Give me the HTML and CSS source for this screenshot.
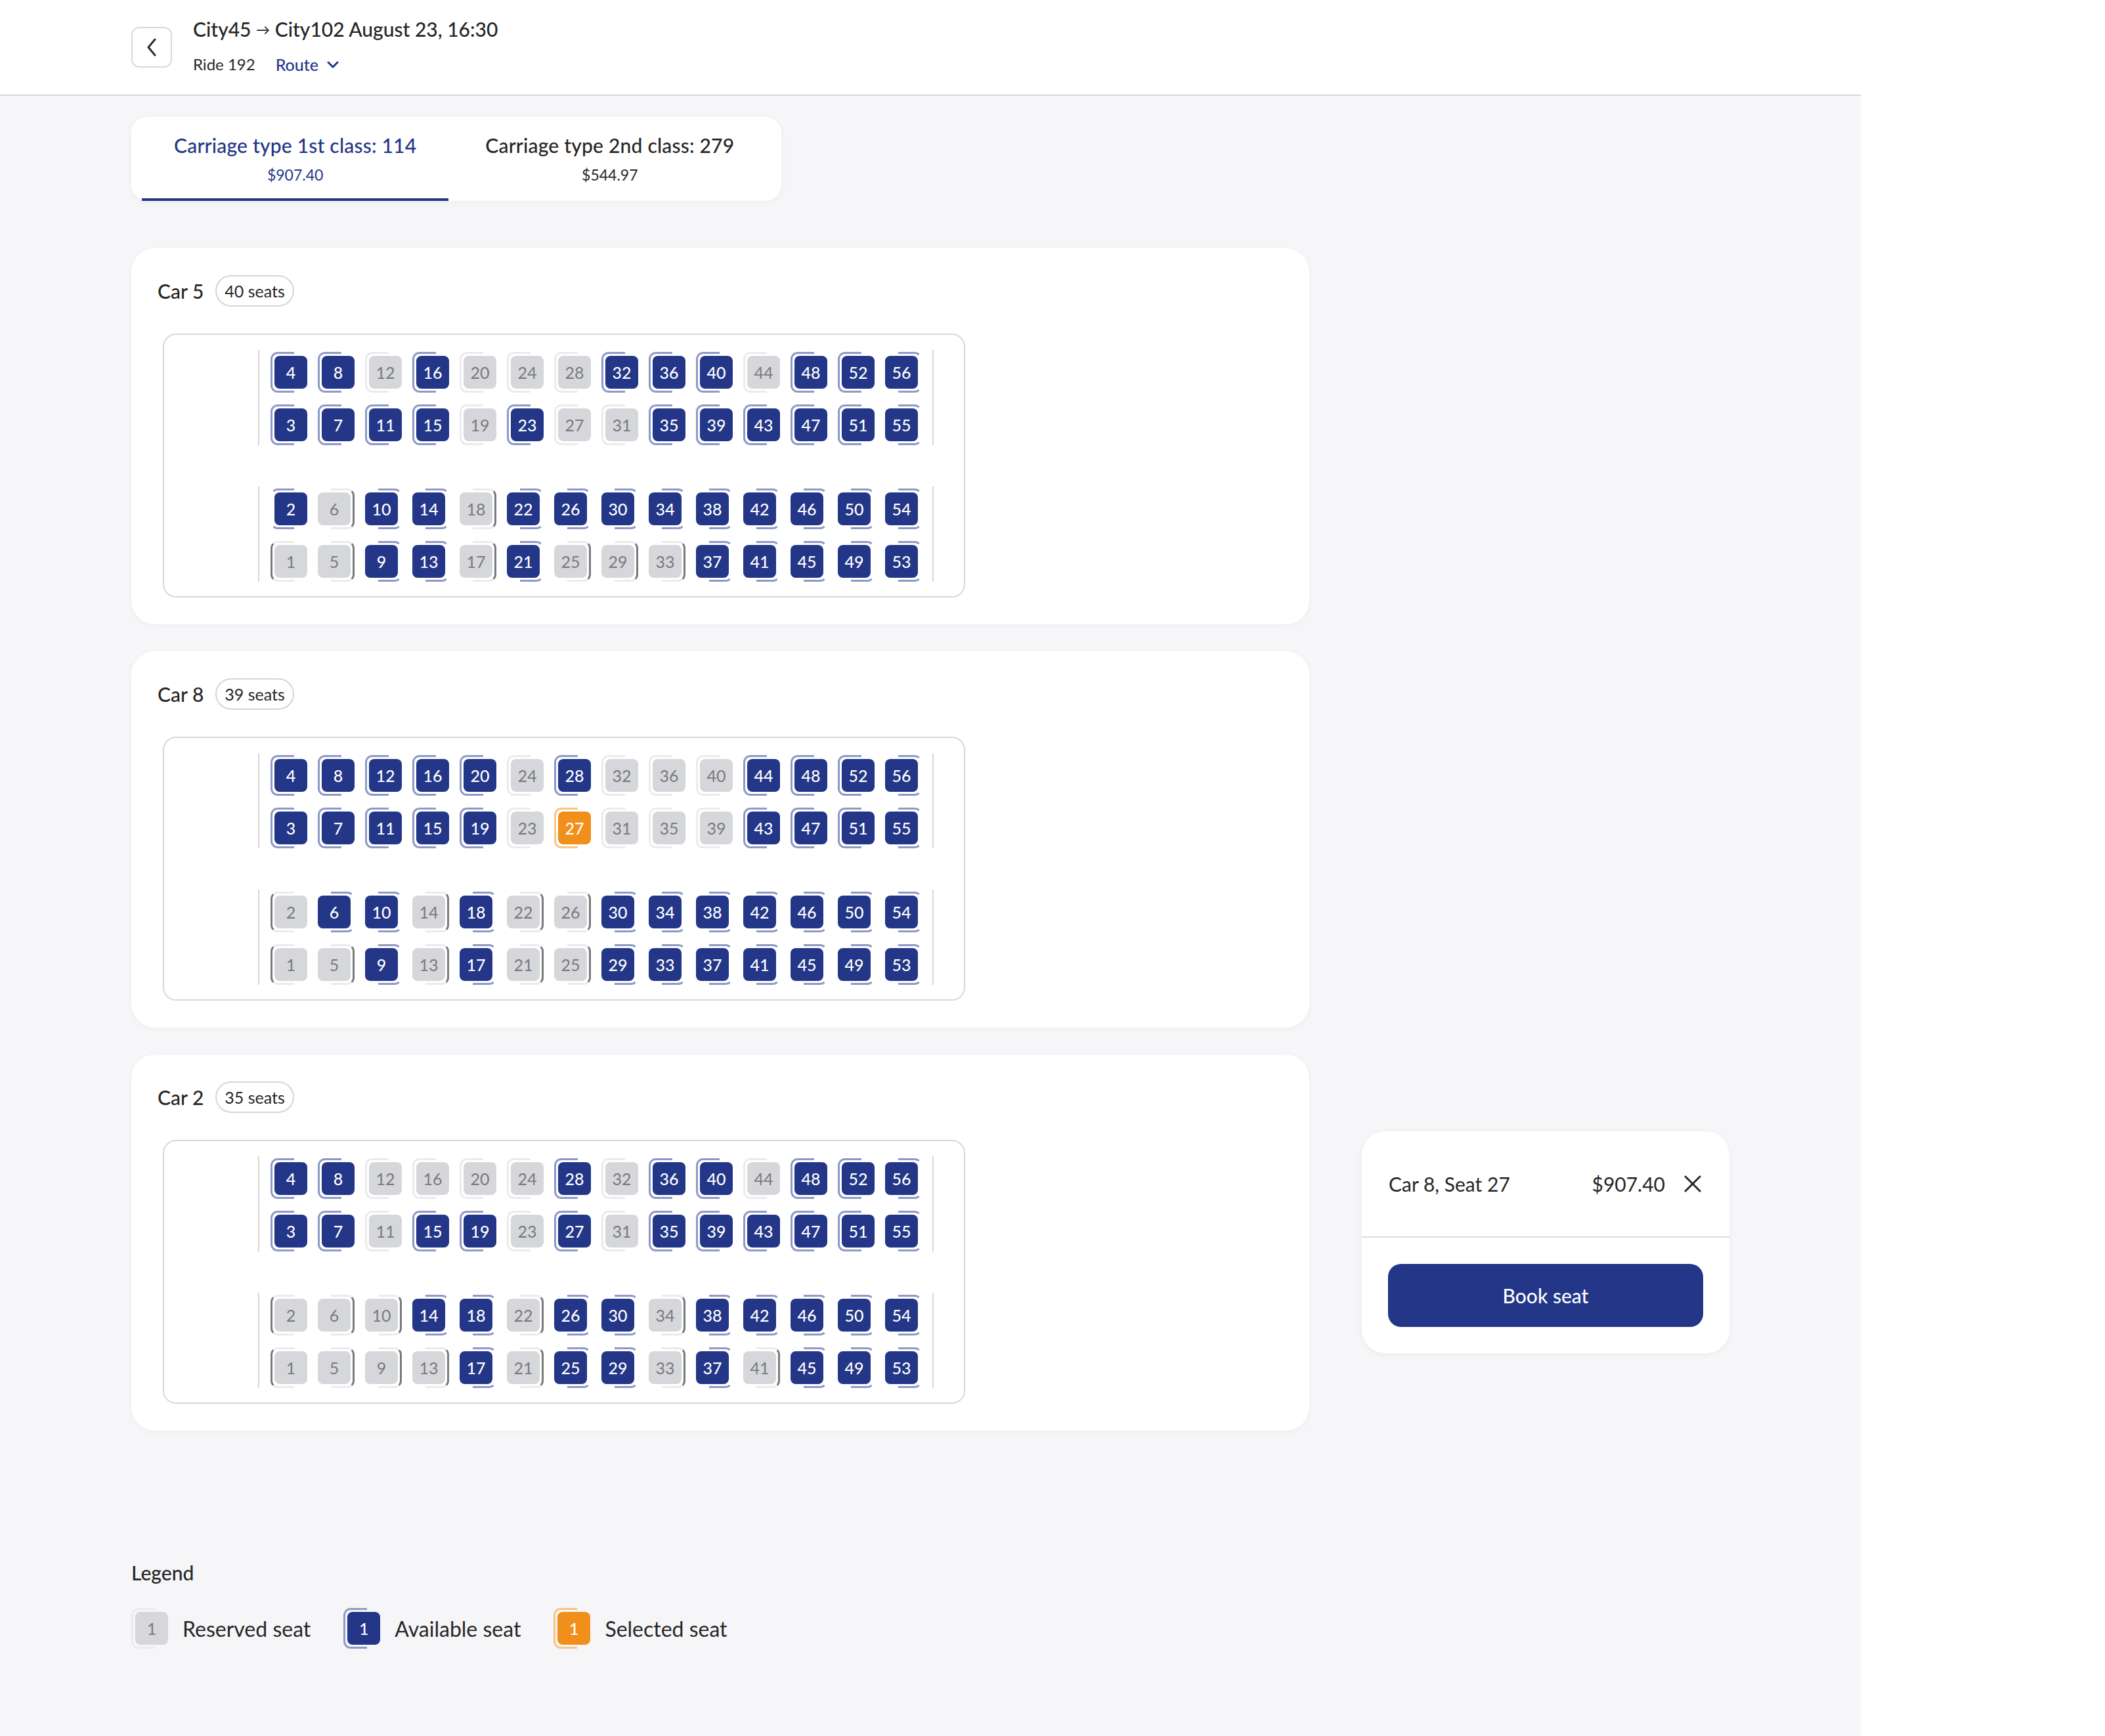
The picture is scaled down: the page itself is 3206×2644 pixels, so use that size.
FILE: index.html
```html
<!DOCTYPE html>
<html lang="en">
<head>
  <meta charset="UTF-8">
  <title>City45 → City102 — Ride 192</title>
  <meta name="viewport" content="width=device-width, initial-scale=1.0">
  <link rel="stylesheet" href="styles.css">
</head>
<body>
  <div class="app">
    <header class="topbar">
      <a class="back" href="#" aria-label="Back">
        <svg width="16" height="28" viewBox="0 0 16 28"><path d="M13 2 L3 14 L13 26" fill="none" stroke="#2b2b2b" stroke-width="3" stroke-linecap="round" stroke-linejoin="round"/></svg>
      </a>
      <div class="trip">
        <div class="trip-title">City45 <span class="arrow">→</span> City102 August 23, 16:30</div>
        <div class="trip-sub">
          <span>Ride 192</span>
          <a class="route" href="#">Route
            <svg width="18" height="11" viewBox="0 0 18 11"><path d="M2 2 L9 9 L16 2" fill="none" stroke="#233687" stroke-width="3" stroke-linecap="round" stroke-linejoin="round"/></svg>
          </a>
        </div>
      </div>
    </header>

    <main class="page">
      <div class="layout">
        <div class="content">
          <!-- Tipos de vagón -->
          <nav class="tabs">
            <a class="tab active" href="#">
              <span class="tab-name">Carriage type 1st class: 114</span>
              <span class="tab-price">$907.40</span>
            </a>
            <a class="tab" href="#">
              <span class="tab-name">Carriage type 2nd class: 279</span>
              <span class="tab-price">$544.97</span>
            </a>
          </nav>

          <!-- Car 5 -->
          <section class="car">
            <div class="car-head">
              <h2>Car 5</h2>
              <span class="badge">40 seats</span>
            </div>
            <div class="seatmap">
              <div class="deck top">
                <div class="row"><span class="seat free">4</span><span class="seat free">8</span><span class="seat taken">12</span><span class="seat free">16</span><span class="seat taken">20</span><span class="seat taken">24</span><span class="seat taken">28</span><span class="seat free">32</span><span class="seat free">36</span><span class="seat free">40</span><span class="seat taken">44</span><span class="seat free">48</span><span class="seat free">52</span><span class="seat free">56</span></div>
                <div class="row"><span class="seat free">3</span><span class="seat free">7</span><span class="seat free">11</span><span class="seat free">15</span><span class="seat taken">19</span><span class="seat free">23</span><span class="seat taken">27</span><span class="seat taken">31</span><span class="seat free">35</span><span class="seat free">39</span><span class="seat free">43</span><span class="seat free">47</span><span class="seat free">51</span><span class="seat free">55</span></div>
              </div>
              <div class="deck bottom">
                <div class="row"><span class="seat free">2</span><span class="seat taken">6</span><span class="seat free">10</span><span class="seat free">14</span><span class="seat taken">18</span><span class="seat free">22</span><span class="seat free">26</span><span class="seat free">30</span><span class="seat free">34</span><span class="seat free">38</span><span class="seat free">42</span><span class="seat free">46</span><span class="seat free">50</span><span class="seat free">54</span></div>
                <div class="row"><span class="seat taken">1</span><span class="seat taken">5</span><span class="seat free">9</span><span class="seat free">13</span><span class="seat taken">17</span><span class="seat free">21</span><span class="seat taken">25</span><span class="seat taken">29</span><span class="seat taken">33</span><span class="seat free">37</span><span class="seat free">41</span><span class="seat free">45</span><span class="seat free">49</span><span class="seat free">53</span></div>
              </div>
            </div>
          </section>

          <!-- Car 8 -->
          <section class="car">
            <div class="car-head">
              <h2>Car 8</h2>
              <span class="badge">39 seats</span>
            </div>
            <div class="seatmap">
              <div class="deck top">
                <div class="row"><span class="seat free">4</span><span class="seat free">8</span><span class="seat free">12</span><span class="seat free">16</span><span class="seat free">20</span><span class="seat taken">24</span><span class="seat free">28</span><span class="seat taken">32</span><span class="seat taken">36</span><span class="seat taken">40</span><span class="seat free">44</span><span class="seat free">48</span><span class="seat free">52</span><span class="seat free">56</span></div>
                <div class="row"><span class="seat free">3</span><span class="seat free">7</span><span class="seat free">11</span><span class="seat free">15</span><span class="seat free">19</span><span class="seat taken">23</span><span class="seat picked">27</span><span class="seat taken">31</span><span class="seat taken">35</span><span class="seat taken">39</span><span class="seat free">43</span><span class="seat free">47</span><span class="seat free">51</span><span class="seat free">55</span></div>
              </div>
              <div class="deck bottom">
                <div class="row"><span class="seat taken">2</span><span class="seat free">6</span><span class="seat free">10</span><span class="seat taken">14</span><span class="seat free">18</span><span class="seat taken">22</span><span class="seat taken">26</span><span class="seat free">30</span><span class="seat free">34</span><span class="seat free">38</span><span class="seat free">42</span><span class="seat free">46</span><span class="seat free">50</span><span class="seat free">54</span></div>
                <div class="row"><span class="seat taken">1</span><span class="seat taken">5</span><span class="seat free">9</span><span class="seat taken">13</span><span class="seat free">17</span><span class="seat taken">21</span><span class="seat taken">25</span><span class="seat free">29</span><span class="seat free">33</span><span class="seat free">37</span><span class="seat free">41</span><span class="seat free">45</span><span class="seat free">49</span><span class="seat free">53</span></div>
              </div>
            </div>
          </section>

          <!-- Car 2 -->
          <section class="car">
            <div class="car-head">
              <h2>Car 2</h2>
              <span class="badge">35 seats</span>
            </div>
            <div class="seatmap">
              <div class="deck top">
                <div class="row"><span class="seat free">4</span><span class="seat free">8</span><span class="seat taken">12</span><span class="seat taken">16</span><span class="seat taken">20</span><span class="seat taken">24</span><span class="seat free">28</span><span class="seat taken">32</span><span class="seat free">36</span><span class="seat free">40</span><span class="seat taken">44</span><span class="seat free">48</span><span class="seat free">52</span><span class="seat free">56</span></div>
                <div class="row"><span class="seat free">3</span><span class="seat free">7</span><span class="seat taken">11</span><span class="seat free">15</span><span class="seat free">19</span><span class="seat taken">23</span><span class="seat free">27</span><span class="seat taken">31</span><span class="seat free">35</span><span class="seat free">39</span><span class="seat free">43</span><span class="seat free">47</span><span class="seat free">51</span><span class="seat free">55</span></div>
              </div>
              <div class="deck bottom">
                <div class="row"><span class="seat taken">2</span><span class="seat taken">6</span><span class="seat taken">10</span><span class="seat free">14</span><span class="seat free">18</span><span class="seat taken">22</span><span class="seat free">26</span><span class="seat free">30</span><span class="seat taken">34</span><span class="seat free">38</span><span class="seat free">42</span><span class="seat free">46</span><span class="seat free">50</span><span class="seat free">54</span></div>
                <div class="row"><span class="seat taken">1</span><span class="seat taken">5</span><span class="seat taken">9</span><span class="seat taken">13</span><span class="seat free">17</span><span class="seat taken">21</span><span class="seat free">25</span><span class="seat free">29</span><span class="seat taken">33</span><span class="seat free">37</span><span class="seat taken">41</span><span class="seat free">45</span><span class="seat free">49</span><span class="seat free">53</span></div>
              </div>
            </div>
          </section>
        </div>

        <!-- Resumen de la reserva -->
        <aside class="booking">
          <div class="booking-line">
            <span class="booking-seat">Car 8, Seat 27</span>
            <span class="booking-price">$907.40</span>
            <a class="close" href="#" aria-label="Remove">
              <svg width="28" height="28" viewBox="0 0 28 28"><path d="M3 3 L25 25 M25 3 L3 25" stroke="#262626" stroke-width="3" stroke-linecap="round"/></svg>
            </a>
          </div>
          <div class="booking-action">
            <button class="btn-book" type="button">Book seat</button>
          </div>
        </aside>
      </div>

      <section class="legend">
        <h3>Legend</h3>
        <div class="legend-items">
          <div class="legend-item"><span class="seat taken">1</span>Reserved seat</div>
          <div class="legend-item"><span class="seat free">1</span>Available seat</div>
          <div class="legend-item"><span class="seat picked">1</span>Selected seat</div>
        </div>
      </section>
    </main>
  </div>
</body>
</html>
```

FILE: styles.css
```css
/* Estructura general */
body {
  margin: 0;
  background: #fff;
  color: #262626;
  font-family: Lato, "Noto Sans", "Liberation Sans", sans-serif;
}

a {
  color: inherit;
  text-decoration: none;
}

.app {
  width: 2834px;
}

/* Cabecera */
.topbar {
  display: flex;
  align-items: flex-start;
  gap: 32px;
  height: 144px;
  padding-left: 200px;
  background: #fff;
  border-bottom: 2px solid #d5d5d9;
}

.back {
  display: flex;
  align-items: center;
  justify-content: center;
  width: 62px;
  height: 62px;
  margin-top: 41px;
  box-sizing: border-box;
  border: 2px solid #dadada;
  border-radius: 12px;
}

.trip {
  margin-top: 24px;
}

.trip-title {
  font-size: 30px;
  line-height: 40px;
  font-weight: 500;
}

.arrow {
  font-size: 21px;
  vertical-align: 3px;
}

.trip-sub {
  display: flex;
  align-items: center;
  gap: 31px;
  margin-top: 17px;
  font-size: 24px;
  line-height: 32px;
}

.route {
  display: flex;
  align-items: center;
  gap: 13px;
  color: #233687;
  font-size: 25px;
  font-weight: 500;
}

/* Zona principal */
.page {
  height: 2498px;
  box-sizing: border-box;
  padding: 32px 200px 0;
  background: #f6f6f8;
}

.layout {
  display: grid;
  grid-template-columns: 1794px 560px;
  column-gap: 80px;
}

.content {
  display: flex;
  flex-direction: column;
  align-items: flex-start;
  gap: 41px;
}

/* Pestañas */
.tabs {
  display: flex;
  margin-bottom: 31px;
  padding: 0 16px;
  background: #fff;
  border-radius: 24px;
  box-shadow: 0 2px 10px rgba(30, 30, 60, 0.05);
}

.tab {
  display: flex;
  flex-direction: column;
  align-items: center;
  gap: 13px;
  padding: 25px 49px 22px;
  border-bottom: 4px solid transparent;
  color: #262626;
}

.tab + .tab {
  padding: 25px 56px 22px;
}

.tab-name {
  font-size: 30px;
  line-height: 36px;
  font-weight: 500;
  letter-spacing: 0.2px;
}

.tab-price {
  font-size: 23px;
  line-height: 28px;
}

.tab.active {
  color: #233687;
  border-bottom-color: #233687;
}

/* Vagones */
.car {
  align-self: stretch;
  padding: 41px 40px;
  background: #fff;
  border-radius: 36px;
  box-shadow: 0 2px 10px rgba(30, 30, 60, 0.04);
}

.car-head {
  display: flex;
  align-items: center;
  gap: 18px;
  height: 48px;
  margin-bottom: 41px;
}

.car-head h2 {
  margin: 0;
  font-size: 30px;
  font-weight: 500;
}

.badge {
  height: 48px;
  box-sizing: border-box;
  padding: 0 12px;
  border: 2px solid #d5d5d5;
  border-radius: 24px;
  font-size: 25px;
  line-height: 44px;
}

.seatmap {
  display: flex;
  flex-direction: column;
  gap: 63px;
  width: fit-content;
  margin-left: 8px;
  padding: 23px 46px 22px 143px;
  border: 2px solid #d8d8db;
  border-radius: 20px;
}

.deck {
  display: flex;
  flex-direction: column;
  gap: 30px;
  padding: 9px 16px 6px 17px;
  border-left: 2px solid #d7d7d7;
  border-right: 2px solid #d7d7d7;
}

.row {
  display: flex;
  gap: 16px;
}

/* Asientos: caja + respaldo */
.seat {
  position: relative;
  display: flex;
  align-items: center;
  justify-content: center;
  flex: none;
  width: 50px;
  height: 50px;
  margin-left: 6px;
  border-radius: 8px;
  font-size: 25px;
  line-height: 1;
  font-weight: 500;
}

.seat::before {
  content: "";
  position: absolute;
  top: -6px;
  bottom: -6px;
  left: -6px;
  width: 33px;
  border: 3px solid;
  border-right: 0;
  border-radius: 11px 0 0 11px;
}

.deck.bottom .seat,
.deck.top .seat:last-child {
  margin-left: 0;
  margin-right: 6px;
}

.deck.bottom .seat::before,
.deck.top .seat:last-child::before {
  left: auto;
  right: -6px;
  border-right: 3px solid;
  border-left: 0;
  border-radius: 0 11px 11px 0;
}

.deck.bottom .seat:first-child {
  margin-left: 6px;
  margin-right: 0;
}

.deck.bottom .seat:first-child::before {
  left: -6px;
  right: auto;
  border-left: 3px solid;
  border-right: 0;
  border-radius: 11px 0 0 11px;
}

.seat.free {
  background: #233687;
  color: #fff;
}

.seat.free::before {
  border-color: #8e99c6;
}

.seat.taken {
  background: #d6d7da;
  color: #7a7a7c;
  font-weight: 400;
}

.seat.taken::before {
  border-color: #ebebec;
}

.seat.picked {
  background: #f0901a;
  color: #fff;
}

.seat.picked::before {
  border-color: #f6c682;
}

/* Resumen */
.booking {
  align-self: end;
  margin-bottom: 118px;
  background: #fff;
  border-radius: 36px;
  box-shadow: 0 2px 10px rgba(30, 30, 60, 0.05);
}

.booking-line {
  display: flex;
  align-items: center;
  height: 160px;
  padding: 0 42px 0 41px;
  border-bottom: 2px solid #dcdcdc;
  font-size: 30px;
}

.booking-seat {
  flex: 1;
}

.close {
  display: flex;
  margin-left: 28px;
}

.booking-action {
  padding: 40px;
}

.btn-book {
  width: 100%;
  height: 96px;
  border: none;
  border-radius: 20px;
  background: #233687;
  color: #fff;
  font-family: inherit;
  font-size: 30px;
  font-weight: 500;
}

/* Leyenda */
.legend {
  margin-top: 198px;
}

.legend h3 {
  margin: 0;
  font-size: 30px;
  line-height: 36px;
  font-weight: 500;
}

.legend-items {
  display: flex;
  gap: 50px;
  margin-top: 42px;
}

.legend-item {
  display: flex;
  align-items: center;
  gap: 22px;
  font-size: 32px;
}
```
